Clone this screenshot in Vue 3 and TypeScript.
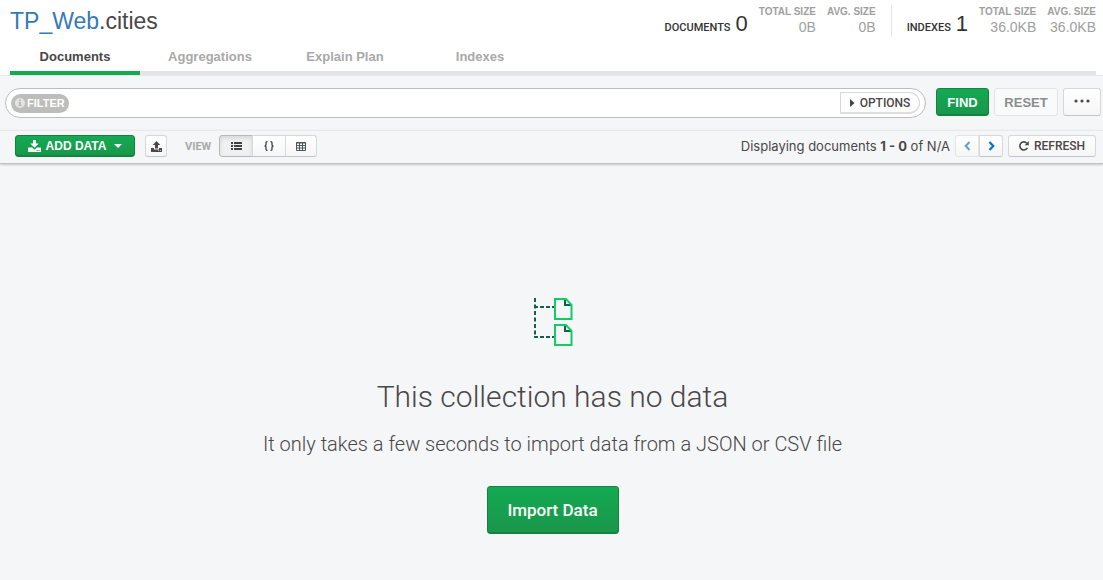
<script setup lang="ts">
import { ref } from 'vue'

interface Stat {
  label: string
  value: string
}
interface StatGroup {
  name: string
  count: number
  details: Stat[]
}

const tabs: string[] = ['Documents', 'Aggregations', 'Explain Plan', 'Indexes']
const activeTab = ref<string>('Documents')
const view = ref<'list' | 'json' | 'table'>('list')
const filter = ref<string>('')

const stats: StatGroup[] = [
  {
    name: 'Documents',
    count: 0,
    details: [
      { label: 'Total Size', value: '0B' },
      { label: 'Avg. Size', value: '0B' },
    ],
  },
  {
    name: 'Indexes',
    count: 1,
    details: [
      { label: 'Total Size', value: '36.0KB' },
      { label: 'Avg. Size', value: '36.0KB' },
    ],
  },
]
</script>

<template>
  <div class="page">
    <header class="header">
      <div class="headline">
        <h1 class="namespace"><a href="#" class="database">TP_Web</a>.cities</h1>
        <div class="stats">
          <div v-for="group in stats" :key="group.name" class="stat-group">
            <span class="stat-name">{{ group.name }}</span>
            <span class="stat-count">{{ group.count }}</span>
            <div v-for="item in group.details" :key="item.label" class="stat">
              <span class="stat-label">{{ item.label }}</span>
              <span class="stat-value">{{ item.value }}</span>
            </div>
          </div>
        </div>
      </div>
      <nav class="tabs">
        <button
          v-for="tab in tabs"
          :key="tab"
          type="button"
          class="tab"
          :class="{ active: tab === activeTab }"
          @click="activeTab = tab"
        >{{ tab }}</button>
      </nav>
    </header>

    <form class="query" @submit.prevent>
      <div class="query-box">
        <label for="filter" class="filter-label">
          <svg width="10" height="10" viewBox="0 0 10 10" aria-hidden="true">
            <circle cx="5" cy="5" r="5" fill="#e4e4e2" />
            <path d="M4 1.5h2v1.5H4zM3.5 4H6v3h.7v1H3.4V7h.8V5h-.7z" fill="#b8b8b6" />
          </svg>
          FILTER
        </label>
        <input id="filter" v-model="filter" type="text" class="filter-input" />
        <button type="button" class="options">
          <svg width="5" height="8" viewBox="0 0 5 8" aria-hidden="true"><path d="M0 0l4.5 4L0 8z" fill="#444" /></svg>
          OPTIONS
        </button>
      </div>
      <button type="submit" class="btn primary find">FIND</button>
      <button type="reset" class="btn reset">RESET</button>
      <button type="button" class="btn more" aria-label="Query history">
        <svg width="16" height="4" viewBox="0 0 16 4" aria-hidden="true" fill="#494747">
          <circle cx="2" cy="2" r="1.6" /><circle cx="8" cy="2" r="1.6" /><circle cx="14" cy="2" r="1.6" />
        </svg>
      </button>
    </form>

    <div class="toolbar">
      <button type="button" class="btn primary add">
        <svg width="13" height="12" viewBox="0 0 13 12" aria-hidden="true" fill="#fff">
          <path d="M5 0h3v3.5h2.7L6.5 7.8 2.3 3.5H5z" />
          <path d="M.5 7.5H4L6.5 9.8 9 7.5h3.5q.5 0 .5.5v3.3q0 .7-.6.7H.6Q0 12 0 11.3V8q0-.5.5-.5z" />
          <path d="M8.7 10h1v1h-1zM10.6 10h1v1h-1z" fill="#17a04d" />
        </svg>
        ADD DATA
        <svg class="caret" width="8" height="4" viewBox="0 0 8 4" aria-hidden="true"><path d="M0 0h8L4 4z" fill="#fff" /></svg>
      </button>
      <button type="button" class="btn export" aria-label="Export collection">
        <svg width="11" height="11" viewBox="0 0 11 11" aria-hidden="true" fill="#494747">
          <path d="M5.5 0L9.3 4H7v3.5H4V4H1.7z" />
          <path d="M.4 7H3v1.5h5V7h2.6q.4 0 .4.4v3q0 .6-.5.6H.5Q0 11 0 10.4v-3Q0 7 .4 7z" />
          <path d="M7.3 9.3h.9v.8h-.9zM9 9.3h.9v.8H9z" fill="#fff" />
        </svg>
      </button>
      <span id="view-label" class="view-label">VIEW</span>
      <div class="segments" role="group" aria-labelledby="view-label">
        <button type="button" class="btn segment" :class="{ pressed: view === 'list' }" aria-label="List" @click="view = 'list'">
          <svg width="11" height="8" viewBox="0 0 11 8" aria-hidden="true" fill="#3d4247">
            <path d="M0 0h2v2H0zM3 0h8v2H3zM0 3h2v2H0zM3 3h8v2H3zM0 6h2v2H0zM3 6h8v2H3z" />
          </svg>
        </button>
        <button type="button" class="btn segment" :class="{ pressed: view === 'json' }" aria-label="JSON" @click="view = 'json'">
          <svg width="10" height="10" viewBox="0 0 10 10" aria-hidden="true" fill="none" stroke="#3d4247" stroke-width="1.3">
            <path d="M3.5.7H3q-1 0-1 1V3.5Q2 5 .5 5 2 5 2 6.5v1.8q0 1 1 1h.5M6.5.7H7q1 0 1 1V3.5Q8 5 9.5 5 8 5 8 6.5v1.8q0 1-1 1h-.5" />
          </svg>
        </button>
        <button type="button" class="btn segment" :class="{ pressed: view === 'table' }" aria-label="Table" @click="view = 'table'">
          <svg width="10" height="9" viewBox="0 0 10 9" aria-hidden="true" fill="none" stroke="#50555a">
            <path d="M.5.5h9v8h-9zM0 1h10M0 3.5h10M0 6h10M3.5 0v9M6.5 0v9" />
          </svg>
        </button>
      </div>
      <span class="paging">Displaying documents <b>1 - 0</b> of N/A</span>
      <div class="pager">
        <button type="button" class="btn page-btn prev" disabled aria-label="Previous page">
          <svg width="7" height="10" viewBox="0 0 7 10" aria-hidden="true" fill="none" stroke="#5ba2d8" stroke-width="2"><path d="M5.5 1L1.7 5l3.8 4" /></svg>
        </button>
        <button type="button" class="btn page-btn next" aria-label="Next page">
          <svg width="7" height="10" viewBox="0 0 7 10" aria-hidden="true" fill="none" stroke="#0a74c4" stroke-width="2.2"><path d="M1.5 1l3.8 4-3.8 4" /></svg>
        </button>
      </div>
      <button type="button" class="btn refresh">
        <svg width="10" height="10" viewBox="0 0 10 10" aria-hidden="true">
          <path d="M8.4 6.8A4 4 0 1 1 7.8 2.2" fill="none" stroke="#494747" stroke-width="1.6" />
          <path d="M9.8 0v4.2H5.6z" fill="#494747" />
        </svg>
        REFRESH
      </button>
    </div>

    <main class="empty">
      <svg width="40" height="50" viewBox="0 0 40 50" fill="none" aria-hidden="true">
        <path d="M2 1v38.5" stroke="#116149" stroke-width="2" stroke-dasharray="4 2.5" />
        <path d="M1 10h20M1 40h20" stroke="#116149" stroke-width="2" stroke-dasharray="4 2" />
        <path d="M32 2v6h6M32 28v6h6" stroke="#116149" stroke-width="2" />
        <path d="M22 2h11l5.500 6v14H22zM22 28h11l5.500 6v14H22z" stroke="#13cc66" stroke-width="2" />
      </svg>
      <h2 class="empty-title">This collection has no data</h2>
      <p class="empty-text">It only takes a few seconds to import data from a JSON or CSV file</p>
      <button type="button" class="btn primary import">Import Data</button>
    </main>
  </div>
</template>

<style>
body {
  margin: 0;
  background: #f5f6f8;
}
</style>

<style scoped>
.page {
  min-height: 100vh;
  background: #f5f6f8;
  color: #494747;
  font-family: "Liberation Sans", Arial, sans-serif;
  font-size: 13px;
}
.page * {
  box-sizing: border-box;
}
button,
input {
  font-family: inherit;
}
svg {
  display: block;
  flex: none;
}
.header {
  padding: 0 7px 0 10px;
  background: #fff;
}
.headline {
  display: flex;
  justify-content: space-between;
  height: 42px;
}
.namespace {
  margin: 0;
  font-size: 23px;
  font-weight: 400;
  line-height: 42px;
}
.database {
  color: #337ab7;
  text-decoration: none;
}
.stats {
  display: flex;
  align-items: flex-start;
  padding-top: 5px;
}
.stat-group {
  display: flex;
  align-items: flex-end;
  height: 32px;
}
.stat-group + .stat-group {
  margin-left: 15px;
  padding-left: 15px;
  border-left: 1px solid #e4e4e4;
}
.stat-name {
  margin-right: 5px;
  color: #333;
  font-family: Roboto, sans-serif;
  font-size: 11px;
  font-weight: 500;
  line-height: 18px;
  text-transform: uppercase;
}
.stat-count {
  color: #333;
  font-size: 22px;
  line-height: 26px;
}
.stat {
  display: flex;
  flex-direction: column;
  align-items: flex-end;
  margin-left: 11px;
  color: #a0a0a0;
}
.stat-label {
  font-size: 10px;
  font-weight: 700;
  line-height: 13px;
  text-transform: uppercase;
}
.stat-value {
  font-size: 14px;
  line-height: 19px;
}
.tabs {
  display: flex;
  gap: 5px;
  border-bottom: 4px solid #e4e4e4;
}
.tab {
  width: 130px;
  height: 33px;
  margin-bottom: -4px;
  padding: 0;
  border: 0;
  border-bottom: 4px solid transparent;
  background: none;
  color: #a9a9a9;
  font-size: 13px;
  font-weight: 700;
}
.tab.active {
  border-bottom-color: #13aa52;
  color: #494747;
}
.query {
  display: flex;
  align-items: flex-start;
  gap: 5px;
  padding: 12px 2px 12px 5px;
  border-top: 1px solid #e4e7e9;
}
.query-box {
  display: flex;
  flex: 1;
  align-items: center;
  height: 30px;
  margin-right: 5px;
  padding: 0 5px;
  border: 1px solid #bdbdbd;
  border-radius: 15px;
  background: #fff;
}
.filter-label {
  display: flex;
  align-items: center;
  gap: 2px;
  height: 19px;
  padding: 0 4px;
  border-radius: 10px;
  background: #bdbdbb;
  color: #fff;
  font-size: 11px;
  font-weight: 700;
}
.filter-input {
  flex: 1;
  min-width: 0;
  height: 24px;
  border: 0;
  outline: 0;
  background: none;
}
.btn {
  display: flex;
  align-items: center;
  justify-content: center;
  flex: none;
  padding: 0;
  border: 1px solid #d8d8d8;
  border-bottom-color: #c4c4c4;
  border-radius: 3px;
  background: linear-gradient(#fff, #f6f6f6);
  color: #494747;
}
.btn.primary {
  border-color: #158242;
  background: linear-gradient(#13aa52, #1a964b);
  box-shadow: inset 0 -1px #158242;
  color: #fff;
  font-weight: 700;
}
.options {
  display: flex;
  align-items: center;
  justify-content: center;
  gap: 5px;
  width: 80px;
  height: 22px;
  padding: 0;
  border: 1px solid #d8d8d8;
  border-bottom: 2px solid #dedede;
  border-radius: 0 11px 11px 0;
  background: #fff;
  color: #494747;
  font-family: Roboto, sans-serif;
  font-size: 12px;
  font-weight: 500;
}
.find {
  width: 53px;
  height: 28px;
  font-size: 13px;
}
.reset {
  width: 64px;
  height: 28px;
  border-color: #e2e4e5;
  background: #f9fafa;
  color: #8d8d8d;
  font-size: 13px;
  font-weight: 700;
}
.more {
  width: 38px;
  height: 28px;
  padding-bottom: 3px;
}
.toolbar {
  display: flex;
  align-items: center;
  height: 34px;
  padding: 0 7px 2px 15px;
  border-top: 1px solid #e7e9eb;
  border-bottom: 1px solid #c2c3c5;
  box-shadow: 0 1px 2px #c6c8ca;
}
.add {
  gap: 5px;
  width: 120px;
  height: 22px;
  font-size: 12px;
}
.caret {
  margin-left: 3px;
}
.export {
  width: 22px;
  height: 22px;
  margin-left: 10px;
}
.view-label {
  margin: 0 8px 0 18px;
  color: #a9a9a9;
  font-family: Roboto, sans-serif;
  font-size: 11px;
  font-weight: 700;
}
.segments,
.pager {
  display: flex;
}
.segment {
  width: 34px;
  height: 22px;
  border-radius: 0;
}
.segment + .segment {
  margin-left: -1px;
}
.segment:first-child {
  border-radius: 3px 0 0 3px;
}
.segment:last-child {
  width: 32px;
  border-radius: 0 3px 3px 0;
}
.segment.pressed {
  border-color: #b8b8b8;
  background: #f1f1f1;
  box-shadow: inset 0 2px 4px #d5d5d5;
}
.paging {
  margin-left: auto;
  font-family: Inter, sans-serif;
  font-size: 13px;
}
.pager {
  margin: 0 5px;
}
.page-btn {
  width: 24px;
  height: 22px;
}
.prev {
  border-color: #e2e4e5;
  border-radius: 3px 0 0 3px;
}
.next {
  border-radius: 0 3px 3px 0;
}
.refresh {
  gap: 5px;
  width: 88px;
  height: 22px;
  font-family: Roboto, sans-serif;
  font-size: 12px;
  font-weight: 500;
}
.empty {
  display: flex;
  flex-direction: column;
  align-items: center;
  padding: 133px 20px 40px 22px;
  text-align: center;
}
.empty-title {
  margin: 30px 0 0;
  font-family: Roboto, sans-serif;
  font-size: 30px;
  font-weight: 300;
  line-height: 40px;
}
.empty-text {
  margin: 14px 0 0;
  font-family: Roboto, sans-serif;
  font-size: 20px;
  font-weight: 300;
  line-height: 26px;
}
.btn.import {
  width: 132px;
  height: 48px;
  margin-top: 29px;
  font-family: Roboto, sans-serif;
  font-size: 17px;
  font-weight: 500;
}
</style>
